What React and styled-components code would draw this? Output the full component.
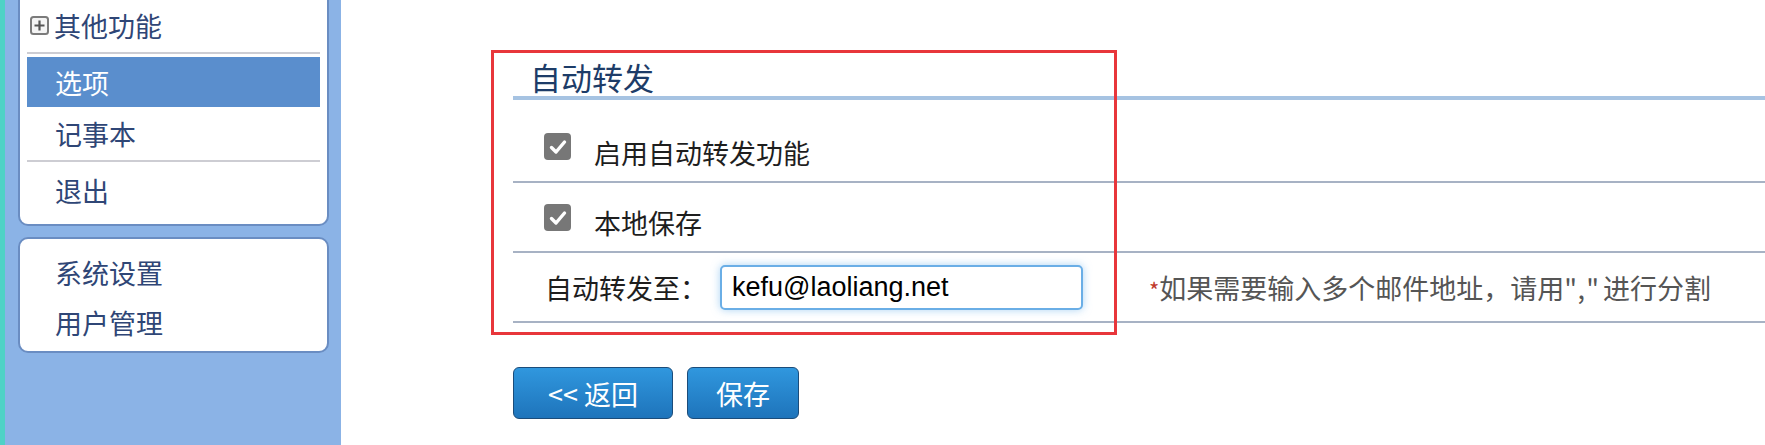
import React from "react";
import styled, { createGlobalStyle } from "styled-components";

const GlobalStyle = createGlobalStyle`
  html, body {
    margin: 0;
    padding: 0;
    background: #fff;
  }
  body {
    font-family: "Noto Sans CJK SC", "Noto Sans", sans-serif;
  }
`;

const Page = styled.div`
  display: flex;
  height: 445px;
  overflow: hidden;
`;

/* left menu */
const Sidebar = styled.div`
  width: 311px;
  flex-shrink: 0;
  background: #8bb3e6;
  border-left: 5px solid #4fd2c6;
  padding: 0 12px 0 13px;
  display: flex;
  flex-direction: column;
  gap: 11px;
`;

const Panel = styled.div`
  background: #fff;
  border: 2px solid #6a8dc2;
  border-top: ${(p) => (p.$cut ? "none" : "2px solid #6a8dc2")};
  border-radius: ${(p) => (p.$cut ? "0 0 10px 10px" : "10px")};
  padding: ${(p) => (p.$cut ? "0 7px 7px" : "8px 7px 4px")};
  display: flex;
  flex-direction: column;
`;

const GroupHead = styled.div`
  height: 50px;
  display: flex;
  align-items: center;
  gap: 5px;
  padding-left: 3px;
  font-size: 27px;
  color: #2f4676;
`;

const MenuItem = styled.div`
  height: ${(p) => p.$h || 52}px;
  display: flex;
  align-items: center;
  padding-left: 28px;
  font-size: 27px;
  color: ${(p) => (p.$active ? "#fff" : "#2f4676")};
  background: ${(p) => (p.$active ? "#5a8ecd" : "transparent")};
`;

const Sep = styled.div`
  height: 2px;
  background: #cdcdd3;
  margin: ${(p) => p.$m || "1px 0"};
`;

/* main content */
const Main = styled.div`
  flex: 1;
  position: relative;
  padding: 57px 0 0 172px;
`;

const Form = styled.div`
  display: flex;
  flex-direction: column;
`;

const Title = styled.div`
  font-size: 31px;
  line-height: 39px;
  color: #1d3c68;
  padding-left: 17px;
  border-bottom: 4px solid #a6c3e2;
  margin-bottom: 13px;
`;

const Row = styled.div`
  display: flex;
  align-items: ${(p) => (p.$center ? "center" : "flex-start")};
  height: ${(p) => (p.$center ? "68px" : "auto")};
  padding: ${(p) => (p.$center ? "0 0 0 32px" : "20px 0 8px 31px")};
  border-bottom: 2px solid #a7b2c4;
`;

const CheckLabel = styled.label`
  display: flex;
  align-items: flex-start;
  gap: 23px;
  font-size: 27px;
  line-height: 40px;
  color: #1e1e1e;
`;

const Box = styled.span`
  width: 27px;
  height: 27px;
  border-radius: 4px;
  background: #777;
  display: flex;
  align-items: center;
  justify-content: center;
  margin-top: ${(p) => p.$mt || 0}px;
`;

const FieldLabel = styled.span`
  width: 175px;
  font-size: 27px;
  color: #1e1e1e;
`;

const EmailInput = styled.input`
  width: 363px;
  height: 45px;
  box-sizing: border-box;
  border: 2px solid #6aaee6;
  border-radius: 5px;
  box-shadow: 0 0 8px rgba(102, 175, 233, 0.55);
  padding: 0 10px;
  font-family: "Liberation Sans", Arial, sans-serif;
  font-size: 27px;
  color: #000;
  outline: none;
`;

const Hint = styled.span`
  margin-left: 66px;
  font-size: 27px;
  color: #555;
  white-space: nowrap;
`;

const Star = styled.span`
  color: #c0392b;
  font-size: 22px;
`;

const Quote = styled.span`
  letter-spacing: 4px;
`;

const Buttons = styled.div`
  display: flex;
  gap: 14px;
  margin-top: 44px;
`;

const Button = styled.button`
  height: 52px;
  min-width: ${(p) => p.$w}px;
  padding: 0 28px;
  border: 1px solid #1b4c7a;
  border-radius: 6px;
  background: linear-gradient(#3097de, #1e74bb);
  color: #fff;
  font-family: "Noto Sans CJK SC", "Noto Sans", sans-serif;
  font-size: 27px;
  line-height: 1;
`;

// annotation frame drawn over the form
const Highlight = styled.div`
  position: absolute;
  left: 150px;
  top: 50px;
  width: 626px;
  height: 285px;
  box-sizing: border-box;
  border: 3px solid #e8363b;
  pointer-events: none;
`;

const PlusIcon = () => (
  <svg width="19" height="19" viewBox="0 0 19 19">
    <rect x="1" y="1" width="17" height="17" rx="2.5" fill="#f4f4f4" stroke="#7b7b7b" strokeWidth="2" />
    <path d="M9.5 4.5v10M4.5 9.5h10" stroke="#555" strokeWidth="2.2" />
  </svg>
);

const Check = ({ mt }) => (
  <Box $mt={mt}>
    <svg width="18" height="16" viewBox="0 0 18 16">
      <path d="M2.5 8.5l4.5 4.5L15.5 3" fill="none" stroke="#fff" strokeWidth="3.4" strokeLinecap="round" strokeLinejoin="round" />
    </svg>
  </Box>
);

export default function App() {
  return (
    <>
      <GlobalStyle />
      <Page>
        <Sidebar>
          <Panel $cut>
            <GroupHead>
              <PlusIcon />
              其他功能
            </GroupHead>
            <Sep $m="2px 0 3px" />
            <MenuItem $active $h={50}>选项</MenuItem>
            <MenuItem>记事本</MenuItem>
            <Sep />
            <MenuItem $h={54}>退出</MenuItem>
          </Panel>
          <Panel>
            <MenuItem $h={50}>系统设置</MenuItem>
            <MenuItem $h={50}>用户管理</MenuItem>
          </Panel>
        </Sidebar>

        <Main>
          <Form>
            <Title>自动转发</Title>
            <Row>
              <CheckLabel>
                <Check />
                启用自动转发功能
              </CheckLabel>
            </Row>
            <Row>
              <CheckLabel>
                <Check mt={1} />
                本地保存
              </CheckLabel>
            </Row>
            <Row $center>
              <FieldLabel>自动转发至：</FieldLabel>
              <EmailInput defaultValue="kefu@laoliang.net" />
              <Hint>
                <Star>*</Star>如果需要输入多个邮件地址，请用<Quote>","</Quote>进行分割
              </Hint>
            </Row>
          </Form>
          <Buttons>
            <Button $w={160}>&lt;&lt; 返回</Button>
            <Button $w={111}>保存</Button>
          </Buttons>
          <Highlight />
        </Main>
      </Page>
    </>
  );
}
